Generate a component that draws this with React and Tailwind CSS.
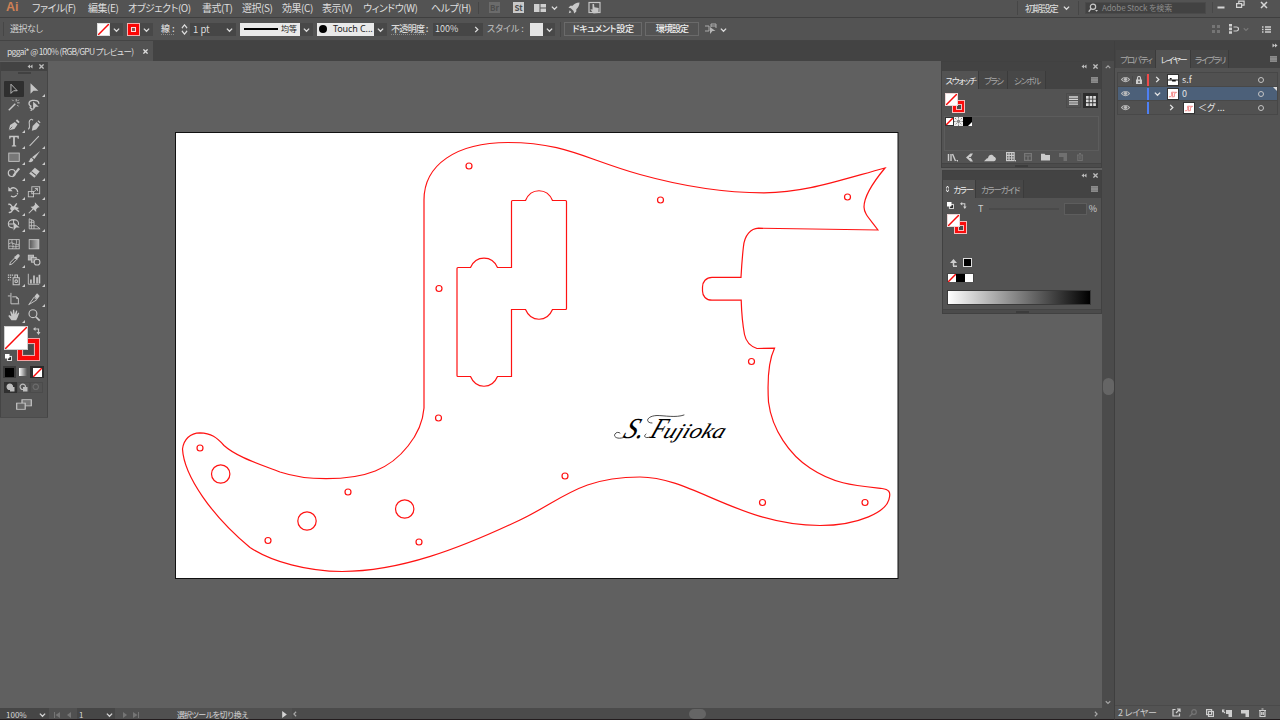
import React from 'react';

const cx = (...c) => c.filter(Boolean).join(' ');

function Icon({ className, box = 16, children, ...rest }) {
  return (
    <svg viewBox={`0 0 ${box} ${box}`} fill="none" stroke="currentColor" strokeWidth="1.2" className={cx('block shrink-0', className)} {...rest}>
      {children}
    </svg>
  );
}

const F = { fill: 'currentColor', stroke: 'none' };

function Chevron({ dir = 'down', className = 'size-[6px]' }) {
  const d = { down: 'M1 3l3 3 3-3', up: 'M1 5.5l3-3 3 3', right: 'M2.5 1l3 3-3 3', left: 'M5.5 1l-3 3 3 3' }[dir];
  return <Icon box={8} className={className} strokeWidth="1.5"><path d={d} /></Icon>;
}

function Menu() {
  return (
    <Icon className="h-[6px] w-[7px] bg-[#6f6f6f] text-[#999]" box={8} preserveAspectRatio="none" strokeWidth="1.1">
      <path d="M0 1h8M0 3h8M0 5h8M0 7h8" />
    </Icon>
  );
}

function NoneSwatch({ className }) {
  return (
    <svg viewBox="0 0 12 12" preserveAspectRatio="none" className={cx('block shrink-0 bg-white', className)}>
      <path d="M0 12L12 0" stroke="#fa0a0a" strokeWidth="1.5" vectorEffect="non-scaling-stroke" />
    </svg>
  );
}

function FillStroke() {
  return (
    <div className="relative h-[20px] w-[20px]">
      <div className="absolute left-[7px] top-[7px] size-[13px] border border-[#f8bcbc] bg-[#fb0d0d] p-[2.5px]">
        <div className="size-full border border-[#f8bcbc] bg-[#4a4a4a]" />
      </div>
      <NoneSwatch className="absolute left-0 top-0 size-[13px] border border-[#a33]/20" />
    </div>
  );
}

const MENUS = [
  ['ファイル(F)', 'w-[56px]'],
  ['編集(E)', 'w-[40px]'],
  ['オブジェクト(O)', 'w-[74px]'],
  ['書式(T)', 'w-[40px]'],
  ['選択(S)', 'w-[40px]'],
  ['効果(C)', 'w-[40px]'],
  ['表示(V)', 'w-[41px]'],
  ['ウィンドウ(W)', 'w-[68px]'],
  ['ヘルプ(H)', 'w-[46px]'],
];

function MenuBar() {
  return (
    <header className="flex h-[18px] items-center border-b border-[#3f3f3f] bg-[#535353] pb-[2px] text-[#dedede]">
      <div className="w-[32px] pl-[6px] text-[12.5px] font-bold leading-[17px] text-[#cf8055] font-['Liberation_Sans']">Ai</div>
      <nav className="flex text-[10px] leading-[14px] tracking-[-0.45px]">
        {MENUS.map(([t, w]) => <span key={t} className={w}>{t}</span>)}
      </nav>
      <div className="ml-[1px] h-[12px] w-px bg-[#464646]" />
      <div className="ml-[10px] flex h-[11px] w-[11px] items-center justify-center bg-[#6b6b6b] text-[8px] font-bold text-[#4d4d4d]">Br</div>
      <div className="ml-[13px] flex h-[11px] w-[11px] items-center justify-center bg-[#c9c9c9] text-[8px] font-bold text-[#4d4d4d]">St</div>
      <Icon className="ml-[10px] h-[8px] w-[12px] text-[#cfcfcf]" box={12} preserveAspectRatio="none">
        <path {...F} d="M0 0h5.5v12H0zM6.5 0H12v5.4H6.5zM6.5 6.6H12V12H6.5z" />
      </Icon>
      <span className="ml-[5px]"><Chevron className="size-[7px]" /></span>
      <Icon className="ml-[10px] size-[12px] text-[#c9c9c9]" box={13}>
        <path {...F} d="M12.5 0.5C9 .6 6.600 1.900 5 4L2.500 4 .500 6.300 3 6.800 6 9.800 6.700 12.500 9 10.200 9 7.800C11 6 12.200 4 12.500.5ZM.8 12.200l1-3.200 2 2z" />
      </Icon>
      <Icon className="ml-[8px] size-[13px] text-[#c4c4c4]" box={13}>
        <rect x="1" y="1.500" width="11" height="10" /><path {...F} d="M4.500 3l1.500 0 .4 3.200 4.300.8-.3 5-4.900.5-3.200-4.300 2.200.2z" />
      </Icon>
      <div className="ml-auto flex items-center">
        <div className="h-[14px] w-px bg-[#464646]" />
        <span className="ml-[7px] w-[38px] text-[9.5px] leading-[12px] tracking-[-1.4px]">初期設定</span>
        <Chevron className="size-[7px]" />
        <div className="ml-[8px] h-[14px] w-px bg-[#464646]" />
        <div className="ml-[6px] flex h-[12px] w-[121px] items-center border border-[#4a4a4a] bg-[#424242] text-[8px] text-[#8b8b8b]">
          <Icon className="ml-[1px] mr-[3px] h-[10px] w-[12px] text-[#c8c8c8]" box={12}>
            <circle cx="6" cy="4.500" r="3.200" strokeWidth="1.4" /><path d="M3.700 6.800L.8 10.500" strokeWidth="1.500" /><path {...F} d="M8.500 8.500h3.500l-1.700 2z" />
          </Icon>
          <span className="whitespace-nowrap tracking-[-0.12px]">Adobe Stock を検索</span>
        </div>
        <div className="ml-[6px] h-[11px] w-px bg-[#484848]" />
        <div className="flex w-[67px] items-center pb-[6px] text-[#d5d5d5]">
          <Icon className="ml-[4px] size-[8px]" box={8} strokeWidth="2"><path d="M.5 6.500h7" /></Icon>
          <Icon className="ml-[11px] size-[9px]" box={9}><path d="M.6 3.600h5v3.800h-5zM2.800 3.500V1.200h5.300v4H5.800" /></Icon>
          <Icon className="ml-[15px] size-[8px]" box={8} strokeWidth="1.500"><path d="M1 1l6 6M7 1L1 7" /></Icon>
        </div>
      </div>
    </header>
  );
}

function ControlBar() {
  return (
    <div className="flex h-[23px] items-center border-b border-[#444] bg-[#535353] text-[9px] text-[#dcdcdc]">
      <div className="ml-[3px] h-[14px] w-px bg-[#464646]" />
      <span className="ml-[6px] w-[87px] text-[9px] tracking-[-0.45px] text-[#cfcfcf]">選択なし</span>
      <NoneSwatch className="size-[13px] border border-[#ddd]" />
      <div className="flex h-[13px] w-[13px] items-center justify-center bg-[#484848]"><Chevron className="size-[7px]" /></div>
      <div className="ml-[4px] flex size-[13px] items-center justify-center border border-[#f3b0b0] bg-[#fb0505]">
        <div className="size-[5px] border border-[#ffdede] bg-[#8a5050]" />
      </div>
      <div className="flex h-[13px] w-[13px] items-center justify-center bg-[#484848]"><Chevron className="size-[7px]" /></div>
      <span className="ml-[8px] w-[19px] whitespace-nowrap font-medium underline decoration-dotted decoration-[#8a8a8a] underline-offset-2">線 :</span>
      <Icon className="ml-[1px] h-[11px] w-[7px]" box={8} preserveAspectRatio="none"><path d="M1 3l3-2.300L7 3M1 5l3 2.300L7 5" /></Icon>
      <div className="ml-[2px] flex h-[13px] w-[46px] items-center bg-[#464646] pl-[3px] pr-[3px] text-[9.5px]"><span className="flex-1 whitespace-nowrap">1 pt</span><Chevron className="size-[7px]" /></div>
      <div className="ml-[4px] flex h-[13px] w-[60px] items-center bg-[#e9e9e9] pl-[4px] text-[8px] text-[#222]">
        <div className="mr-[3px] h-[2px] w-[34px] bg-black" />均等
      </div>
      <div className="flex h-[13px] w-[13px] items-center justify-center bg-[#484848]"><Chevron className="size-[7px]" /></div>
      <div className="ml-[4px] flex h-[13px] w-[57px] items-center bg-[#e9e9e9] pl-[2px] text-[9px] text-[#222]">
        <div className="mr-[6px] size-[8px] rounded-full bg-black" /><span className="whitespace-nowrap font-['Noto_Sans'] tracking-[-0.1px]">Touch C...</span>
      </div>
      <div className="flex h-[13px] w-[13px] items-center justify-center bg-[#484848]"><Chevron className="size-[7px]" /></div>
      <span className="ml-[4px] w-[42px] whitespace-nowrap text-[9px] font-medium tracking-[-0.65px] underline decoration-dotted decoration-[#8a8a8a] underline-offset-2">不透明度 :</span>
      <div className="flex h-[13px] w-[50px] items-center bg-[#464646] pl-[2px] text-[9px]"><span className="w-[38px]">100%</span><Chevron dir="right" className="size-[7px]" /></div>
      <span className="ml-[4px] w-[43px] whitespace-nowrap text-[9px] text-[#c4c4c4]">スタイル :</span>
      <div className="size-[13px] bg-[#e3e3e3]" />
      <div className="flex h-[13px] w-[12px] items-center justify-center bg-[#484848]"><Chevron className="size-[7px]" /></div>
      <div className="ml-[5px] h-[15px] w-px bg-[#464646]" />
      <div className="ml-[3px] flex h-[14px] w-[78px] items-center justify-center whitespace-nowrap border border-[#6a6a6a] font-medium tracking-[-0.35px] text-[#eee]">ドキュメント設定</div>
      <div className="ml-[3px] flex h-[14px] w-[54px] items-center justify-center whitespace-nowrap border border-[#6a6a6a] font-medium tracking-[-0.9px] text-[#eee]">環境設定</div>
      <Icon className="ml-[6px] size-[12px] text-[#b5b5b5]" box={12}>
        <path d="M0 3h4v5H0M6 4V1h5v4M6 3h5" strokeWidth=".9" /><path {...F} d="M5 4l5.500 4H7.500L5 11z" />
      </Icon>
      <span className="ml-[3px]"><Chevron className="size-[7px]" /></span>
      <div className="ml-auto flex items-center pr-[9px] text-[#d0d0d0]">
        <Icon className="size-[8px] text-[#757575]" box={8}><path {...F} d="M0 0h3v3H0zM5 0h3v3H5zM0 5h3v3H0zM5 5h3v3H5z" /></Icon>
        <Icon className="ml-[9px] size-[10px]" box={10}><path {...F} d="M0 0h3v2.600H0zM0 3.600h3v2.600H0zM0 7.200h3v2.600H0z" /><path d="M4.500 3h3a2 2 0 010 4h-3" /></Icon>
        <span className="ml-[4px] text-[#777]"><Chevron /></span>
        <Icon className="ml-[13px] size-[9px]" box={9}><path d="M0 2h1.500M0 4.500h1.500M0 7h1.500M3 2h6M3 4.500h6M3 7h6" strokeWidth="1.300" /></Icon>
      </div>
    </div>
  );
}

const TOOLS = [
  [
    ['sel', <path d="M4.500 2.500v10.500l3-3h4.200z" strokeWidth="1" />],
    ['dir', <path {...F} d="M4 1.500v12l3.400-3.400H13z" />, 1],
    ['wand', <><path d="M2 14l7.500-7.500" strokeWidth="1.700" /><path d="M10.500 1v3M14.500 5.500h-3M6 2l1.500 1.500M13.500 2L12 3.500M13 9.500L11.800 8" strokeWidth="1" /></>],
    ['lasso', <><path d="M5 9.500C1 8 1.500 3.500 6 2.800s8 .7 7.500 4M5 9.500c-2 .5-2 2 0 2.500s.5 2-1 2.200" strokeWidth="1.500" /><path {...F} d="M7 4l6.500 6H10l-3 4z" /></>],
  ],
  [
    ['pen', <><path {...F} d="M2 14l1.500-6L9 4.500l3 3L8.500 12.500z" /><path {...F} d="M10 3l1.500-1.500 3 3L13 6z" /><path d="M2.500 13.500l3.500-3.500" stroke="#535353" strokeWidth=".8" /></>, 1],
    ['curve', <><path {...F} d="M5.500 14.500l1-5.500L11 4.500l3.500 3.500-4 5z" /><path {...F} d="M12 3.600l1-1 2.500 2.500-1 1z" /><path d="M1.500 13C5 10 1 6 3 3s3-1 4-.5" /></>],
    ['type', <path {...F} d="M2.500 2h11v3.300h-1.200l-.5-1.500H9v9l1.500.4v1.100h-5v-1.100l1.500-.4V3.800H4.200l-.5 1.500H2.500z" />, 1],
    ['line', <path d="M3 13.500L13.500 2.500" />, 1],
    ['rect', <rect x="2" y="3.500" width="12" height="9.500" fill="#777" strokeWidth="1" />, 1],
    ['brush', <><path {...F} d="M15 1L8.500 10.300 5.800 8.200z" /><path {...F} d="M5 8.800l2.300 2C7 13.500 4 14.500 1.500 13.500 3.500 12.500 2.800 9.500 5 8.800z" /></>, 1],
    ['shaper', <><circle cx="5.500" cy="8" r="4" strokeWidth="1.400" /><path {...F} d="M15 3.500l-6.500 7.500-2.500 2 .8-3L12.800 2z" /></>, 1],
    ['eraser', <><path {...F} d="M9 2l5.500 4.300-6 7.200-6-4.800z" /><path d="M5 6.500l5.300 4.300" stroke="#535353" /></>, 1],
  ],
  [
    ['rotate', <><path d="M4 4.500a5 5 0 11.500 8" strokeWidth="1.500" strokeDasharray="11 1 1.500 1" /><path {...F} d="M1.500 2v5h5z" /></>, 1],
    ['scale', <><rect x="5.500" y="2" width="9" height="8" strokeWidth="1" /><rect x="1.500" y="7.500" width="6" height="6" strokeWidth="1" /><path d="M7 8.500L12 4M9 4h3v3" strokeWidth="1" /></>, 1],
    ['width', <><path d="M1.500 4c4-2 3 4 6 3s2-4 4-4M2 13c4 1 3-3 6-4s4 3 6 3M7 7l6 1.500" strokeWidth="1.700" /><circle cx="6" cy="8.500" r="2.300" {...F} /></>, 1],
    ['pin', <><path {...F} d="M9 1.500l5.500 5.500-2 .5-2 2 0 3L4 6.500 7 6.300l2-2z" /><path d="M7 9l-5 5" /></>, 1],
    ['shape', <><path d="M7 12.500C3 12.500 1.500 10 1.500 7.500S4 3 8 3s6 3 5 6M1.500 8H8M7.500 3v5" strokeWidth="1.200" /><path {...F} d="M7.500 6l7 6h-4l-3 3.500z" /></>, 1],
    ['persp', <path d="M2.500 2v11.500H15M2.500 2L8 4.500v9M2.500 6H8M2.500 10h8L15 13.500M5 3v10.500" strokeWidth="1" />, 1],
  ],
  [
    ['mesh', <><rect x="2" y="3" width="12" height="10.500" strokeWidth="1" /><path d="M2 8c4-4 8 3 12 0M6 3c-2 4 3 6 0 10.500M10.500 3c2 4-2 6 0 10.500M2 11c3-2 6 2 12-1" strokeWidth=".9" /></>],
    ['grad', <rect x="2.500" y="3" width="11" height="10.500" fill="url(#toolgrad)" strokeWidth="1" />],
    ['dropper', <><path d="M3 13.500l1-3L9 5.500l2 2-5 5z" strokeWidth="1.100" /><path {...F} d="M8 4.500l1.500-.8L12 1.500c2-.5 3 1 2.300 2.500L12 6.500l-.5 1.500z" /></>, 1],
    ['blend', <><rect x="1.500" y="2.500" width="6" height="5.500" fill="#aaa" strokeWidth="1" /><rect x="5" y="5" width="5.500" height="5.500" fill="#888" strokeWidth="1" /><circle cx="11.500" cy="10.500" r="3.300" fill="#535353" /></>],
  ],
  [
    ['spray', <><path d="M7 6.500h7v8H7zM9 6V3.500h3V6" strokeWidth="1.200" /><circle cx="10.500" cy="10.500" r="1.500" /><path d="M1 3.500h6M1 6.200h4M1 9h3" strokeWidth="1.300" strokeDasharray="1.500 .8" /></>, 1],
    ['graph', <><path d="M1.500 2v12H14" strokeWidth="1" /><path d="M4.500 13V8.500M8 13V4M11.500 13V6M14.200 13V3" strokeWidth="1.900" /></>, 1],
  ],
  [
    ['artboard', <path d="M4.500 1v12.500H14M1 4.500h3M6 5.500h5l2 2v5.500M11 5.500v2h2" strokeWidth="1.100" />],
    ['slice', <><path d="M2 14.500L8 6l3 3z" strokeWidth="1.100" /><path {...F} d="M8.500 5l3-3.500 3 3L11.500 8.500z" /></>, 1],
    ['hand', <path {...F} d="M5 14L1.500 9l1-1L5 9.500 3.500 4l1.300-.4L6.500 7 6.800 2h1.400L8.800 7 10.500 2.800l1.300.4L11 7.800 13 5l1 .7-2 5.300L10.500 14z" />, 1],
    ['zoom', <><circle cx="6.800" cy="6.500" r="4.500" strokeWidth="1.300" /><path d="M10 10l4.500 4.500" strokeWidth="2" /></>],
  ],
];

function PanelHead() {
  return (
    <div className="flex h-[9px] shrink-0 items-center justify-end bg-[#434343] text-[#bdbdbd]">
      <Icon className="h-[5px] w-[6px]" box={6}><path {...F} d="M3 0.500v5L0 3zM6 .5v5L3 3z" /></Icon>
      <Icon className="ml-[6px] mr-[3px] size-[5px]" box={6} strokeWidth="1.600"><path d="M.5.5l5 5M5.500.5l-5 5" /></Icon>
    </div>
  );
}

function Toolbar() {
  return (
    <aside className="absolute left-0 top-[1px] flex h-[355px] w-[48px] flex-col border-x border-[#454545] bg-[#535353] text-[#c6c6c6] shadow-[0_1px_0_#4b4b4b]">
      <svg width="0" height="0" className="absolute"><linearGradient id="toolgrad"><stop stopColor="#555" /><stop offset="1" stopColor="#bbb" /></linearGradient></svg>
      <PanelHead />
      <div className="mx-auto mt-[1px] h-[2px] w-[13px] shrink-0 bg-[#414141]" />
      <div className="mt-[7px] flex shrink-0 flex-col gap-[3.5px] px-[3px]">
        {TOOLS.map((group, g) => (
          <div key={g} className="grid grid-cols-[20px_20px]">
            {group.map(([name, art, sub]) => (
              <div key={name} className={cx('relative flex h-[16px] items-center justify-center', name === 'sel' && 'rounded-[1px] bg-[#2f2f2f]')}>
                <Icon className="size-[14px]">{art}</Icon>
                {sub && <Icon box={3} className="absolute bottom-0 right-[-1px] size-[3px] text-[#ccc]"><path {...F} d="M3 0v3H0z" /></Icon>}
              </div>
            ))}
          </div>
        ))}
      </div>
      <div className="relative mx-[3px] mt-[3.5px] h-[36px] shrink-0">
        <div className="absolute left-[13px] top-[12px] h-[23px] w-[23px] border border-[#f3a3a3] bg-[#fa0808] p-[4px]">
          <div className="size-full border border-[#eaa] bg-[#535353] p-px"><div className="size-full bg-[#494949]" /></div>
        </div>
        <NoneSwatch className="absolute left-0 top-0 size-[24px] border border-[#cfcfcf]" />
        <Icon className="absolute left-[29px] top-[1px] size-[8px]" box={8}><path d="M2 2h3.500v4" /><path {...F} d="M2.500 0v4L0 2zM3.500 5h4L5.500 8z" /></Icon>
        <Icon className="absolute left-[1px] top-[28px] size-[7px]" box={7}><rect x="2.500" y="2.500" width="4" height="4" fill="#111" stroke="#ddd" /><rect x="0" y="0" width="4.500" height="4.500" fill="#fff" stroke="none" /></Icon>
      </div>
      <div className="mt-[2px] flex h-[14px] shrink-0 items-center pl-[2px] pt-[2px]">
        <div className="flex h-[12px] w-[13px] items-center justify-center bg-[#3a3a3a]"><div className="size-[9px] bg-black" /></div>
        <div className="flex h-[12px] w-[14px] items-center justify-center"><div className="size-[8px] bg-[linear-gradient(to_right,#fff,#555)]" /></div>
        <div className="flex h-[12px] w-[14px] items-center justify-center bg-[#2c2c2c]"><NoneSwatch className="size-[9px]" /></div>
      </div>
      <div className="mt-[4px] flex shrink-0 pl-[3px] text-[#bdbdbd]">
        {[0, 1, 2].map((i) => (
          <div key={i} className={cx('flex h-[11px] w-[13px] items-center justify-center', i === 0 ? 'bg-[#303030]' : 'border border-[#4b4b4b]', i === 2 && 'text-[#6c6c6c]')}>
            <Icon className="size-[9px]" box={9}><circle cx="3.800" cy="3.800" r="2.700" fill={i === 0 ? 'currentColor' : 'none'} />{i < 2 && <rect x="4" y="4" width="4.500" height="4.500" {...F} />}</Icon>
          </div>
        ))}
      </div>
      <Icon className="mx-auto mt-[6px] h-[11px] w-[16px]" box={16} preserveAspectRatio="none">
        <rect x="6" y="1" width="9.300" height="9" fill="#777" /><rect x=".700" y="6" width="8.500" height="9" fill="#666" />
      </Icon>
    </aside>
  );
}

const HOLES = [[469, 166], [660.5, 200], [847.5, 197], [439, 288.5], [751.5, 361.5], [438.5, 418], [200, 448], [348, 492], [268, 540.5], [419, 542], [565, 476], [762.5, 502.5], [865, 502.5]];
const POTS = [[220.7, 474], [307, 521], [404.7, 509]];

function Artboard() {
  return (
    <svg viewBox="0 61 1102 647" className="block h-[647px] w-[1102px]">
      <rect x="175.500" y="132.500" width="722.500" height="446" fill="#fff" stroke="#111" />
      <g fill="none" stroke="#ff1212" strokeWidth="1.200">
        <path d="M424 408V200C424 165 456 142.500 508 142.500C565 142.500 585 159 640 174.500C685 187 728 192.800 764 192.800C804 192.500 832 182.500 885 168C875 180 864 196 864 207C864 214 870 219 878 230L758.500 228.200C751 228.500 744.500 235 743.400 247Q742 259 741 277.300H712C706 277.300 702.500 282 702.500 287V291C702.500 296 706 300.200 712 300.200H741.200Q741.800 320 744.500 334.500C746 342 751 346.500 757 348.500L774.500 348.200C767 364 767.500 385 768.500 402C772 430 790 455 810 468C834 484 854 485.500 882 488.500C889 489.500 890.500 492 889.500 497C888 512 858 525.500 820 525.500C740 525.500 692 477 640 477C580 477 562 500 520 520C460 548.500 400 571.500 342 571.500C308 571.500 272 562 250 547.500C212 516 184 476 182.500 449C183.500 440 190 432.800 200 432.800C211 433.200 217 437.500 224 445.500C236 456.500 258 463.500 280 472C298 478 312 478.700 326 478.700C366 478.700 390 469 408 446C418.500 433 423 421 424 408Z" />
        <path d="M458 267.500H470.500C476 255 492 255 497.500 267.500H511.500V201.500Q511.500 200.500 512.500 200.500H525.500C531 187.500 547 187.500 552.500 200.500H565.500Q566.500 200.500 566.500 201.500V308.500Q566.500 309.500 565.500 309.500H552.500C547 322.500 531 322.500 525.500 309.500H511.500V376.500H497.500C492 389.500 476 389.500 470.500 376.500H458Q457 376.500 457 375.500V268.500Q457 267.500 458 267.500Z" />
        {HOLES.map(([x, y]) => <circle key={`${x}-${y}`} cx={x} cy={y} r="3" />)}
        {POTS.map(([x, y]) => <circle key={x} cx={x} cy={y} r="9.200" />)}
      </g>
      <g className="fill-black italic" fontFamily="'Liberation Serif', serif">
        <text transform="translate(622 438) skewX(-22)" fontSize="29" textLength="20" lengthAdjust="spacingAndGlyphs">S.</text>
        <text transform="translate(649 438) skewX(-22)" fontSize="29" textLength="14" lengthAdjust="spacingAndGlyphs">F</text>
        <text transform="translate(662 438) skewX(-22)" fontSize="21" textLength="61" lengthAdjust="spacingAndGlyphs">ujioka</text>
      </g>
      <g fill="none" stroke="#000" strokeLinecap="round" strokeWidth=".7">
        <path d="M625 437C618 440 613 437 615 434C616 432 619 432 620 433" />
        <path d="M652 423C645 423 646 416 657 415.500C664 415.500 676 418 684 415" />
        <path d="M650 437C645 439 643 436 646 434" />
      </g>
    </svg>
  );
}

function Tabs({ items, active, className }) {
  return (
    <div className={cx('flex shrink-0 bg-[#434343]', className)}>
      {items.map(([t, w], i) => (
        <div key={i} className={cx('flex items-center justify-center whitespace-nowrap border-r border-[#3b3b3b] pl-px text-[8.5px] tracking-[-1.3px]', w, i === active ? 'bg-[#535353] text-[#ececec]' : 'bg-[#474747] text-[#a8a8a8]')}>{t}</div>
      ))}
      <div className="ml-auto flex items-center pr-[3px]"><Menu /></div>
    </div>
  );
}

function Grip() {
  return <div className="flex h-[4px] shrink-0 items-center justify-center border-t border-[#444] bg-[#4b4b4b]"><div className="h-[2px] w-[13px] bg-[#3c3c3c]" /></div>;
}

function SwatchPanel() {
  return (
    <section className="absolute left-[941px] top-0 flex h-[107px] w-[161px] flex-col border border-[#414141] bg-[#535353]">
      <PanelHead />
      <Tabs className="h-[18px]" active={0} items={[['スウォッチ', 'w-[37px]'], ['ブラシ', 'w-[29px]'], ['シンボル', 'w-[38px]']]} />
      <div className="flex justify-between px-[3px] pt-[4px]">
        <FillStroke />
        <div className="flex gap-[2px]">
          <div className="flex size-[15px] items-center justify-center border border-[#4b4b4b]"><Icon className="size-[9px] text-[#d5d5d5]" box={9} strokeWidth="1.300"><path d="M0 1h9M0 3.400h9M0 5.800h9M0 8.200h9" /></Icon></div>
          <div className="flex size-[15px] items-center justify-center bg-[#2d2d2d]"><Icon className="size-[10px] text-[#dadada]" box={10}><path {...F} d="M0 0h2.700v2.700H0zM3.600 0h2.700v2.700H3.600zM7.200 0h2.700v2.700H7.200zM0 3.600h2.700v2.700H0zM3.600 3.600h2.700v2.700H3.600zM7.200 3.600h2.700v2.700H7.200zM0 7.200h2.700v2.700H0zM3.600 7.200h2.700v2.700H3.600zM7.200 7.200h2.700v2.700H7.200z" /></Icon></div>
        </div>
      </div>
      <div className="mx-[2px] mt-[3px] flex h-[35px] border border-[#5c5c5c] bg-[#515151]">
        <NoneSwatch className="size-[9px] border border-[#333]" />
        <Icon className="size-[9px] bg-[#eee] text-[#555]" box={9}><path d="M4.500 0v9M0 4.500h9M1 1l7 7M8 1L1 8" strokeWidth=".7" strokeDasharray="1.500 1" /></Icon>
        <Icon className="size-[9px] bg-black text-white" box={9}><path {...F} d="M9 5v4H5z" /></Icon>
      </div>
      <div className="flex flex-1 items-center pl-[5px] text-[#cbcbcb]">
        <Icon className="size-[11px]" box={11} strokeWidth="1.400"><path d="M1.500 2v7M4 2v7M5.500 2l3 7" /><path {...F} d="M9 8h2v2z" /></Icon>
        <Icon className="ml-[8px] size-[9px]" box={9}><path {...F} d="M0 4.500L4.500.5h2.500L4.500 4.500 7 8.500H4.500z" /><path d="M3 4.500h4" stroke="#535353" strokeWidth=".8" /></Icon>
        <Icon className="ml-[9px] h-[9px] w-[12px]" box={12} preserveAspectRatio="none"><path {...F} d="M0 11l3-4h1C4 3 8 0 10 5c3 1 2 6 0 6z" /></Icon>
        <Icon className="ml-[10px] size-[10px]" box={10}><rect x=".600" y=".6" width="7.500" height="8" /><path d="M.6 3.300h7.500M.6 6h7.500M3 .6v8M5.700.6v8" /><path {...F} d="M8.500 8h1.500v2z" /></Icon>
        <Icon className="ml-[8px] size-[8px] text-[#777]" box={8}><rect x=".6" y=".6" width="6.800" height="6.800" /><path d="M.6 3h6.800M4 3v4" /></Icon>
        <Icon className="ml-[9px] h-[8px] w-[9px]" box={10} preserveAspectRatio="none"><path {...F} d="M0 1h4l1 1.500h5V9.500H0z" /></Icon>
        <Icon className="ml-[9px] size-[8px] text-[#707070]" box={8}><path {...F} d="M0 0h8v8H4.500V4H0z" /></Icon>
        <Icon className="ml-[9px] size-[8px] text-[#707070]" box={8}><path d="M1 2h6M1.800 2v5.500h4.400V2M3 .6h2M4 3v3.500" /></Icon>
      </div>
      <Grip />
    </section>
  );
}

function ColorPanel() {
  return (
    <section className="absolute left-[942px] top-[109px] flex h-[144px] w-[160px] flex-col border border-[#414141] bg-[#535353]">
      <PanelHead />
      <Tabs className="h-[18px]" active={0} items={[[<span key="c" className="flex items-center gap-[4px]"><Icon className="h-[6px] w-[3px]" box={6} preserveAspectRatio="none"><path d="M0 2.500L3 0l3 2.500M0 3.500L3 6l3-2.500" /></Icon>カラー</span>, 'w-[33px]'], ['カラーガイド', 'w-[48px]']]} />
      <div className="flex h-[110px] shrink-0 flex-col px-[4px] pt-[4px]">
        <div className="flex h-[12px] text-[#cfcfcf]">
          <Icon className="size-[7px]" box={7}><rect x="2.500" y="2.500" width="4" height="4" fill="#111" /><rect width="4.500" height="4.500" fill="#fff" stroke="none" /></Icon>
          <Icon className="ml-[6px] size-[7px]" box={8}><path d="M2 2h3.500v4" /><path {...F} d="M2.500 0v4L0 2zM3.500 5h4L5.500 8z" /></Icon>
          <span className="ml-[11px] mt-[2px] w-[6px] text-[9px] leading-[10px]">T</span>
          <div className="ml-[5px] mt-[6px] h-[2px] w-[70px] border border-[#4a4a4a]" />
          <div className="ml-[5px] mt-[1px] h-[12px] w-[23px] border border-[#5d5d5d] bg-[#484848]" />
          <span className="ml-[2px] mt-[2px] text-[9px] leading-[10px]">%</span>
        </div>
        <FillStroke />
        <div className="mt-[23px] flex h-[11px] items-center gap-[5px] text-[#cfcfcf]">
          <Icon className="ml-[3px] size-[8px]" box={8}><path d="M3 7.200h4M3.500 7V3" strokeWidth="1.500" /><path {...F} d="M3.500 0L7 4H0z" /></Icon>
          <div className="size-[9px] border border-[#ddd] bg-black" />
        </div>
        <div className="mt-[5px] flex h-[9px] w-[27px] border border-[#444]">
          <NoneSwatch className="h-[8px] w-[8px]" /><div className="h-[8px] w-[9px] bg-black" /><div className="h-[8px] w-[9px] bg-white" />
        </div>
        <div className="mt-[8px] h-[15px] w-[144px] border border-[#3a3a3a] bg-[linear-gradient(to_right,#fff,#000)]" />
      </div>
      <div className="mt-auto"><Grip /></div>
    </section>
  );
}

function StatusBar() {
  return (
    <footer className="flex h-[12px] items-center overflow-hidden border-b border-[#221c1e] bg-[#4b4b4b] text-[8px] leading-[11px] text-[#d5d5d5]">
      <div className="flex h-full w-[49px] items-center bg-[#464646] pl-[6px] pt-[2px]"><span className="w-[33px]">100%</span><Chevron className="size-[7px]" /></div>
      <div className="flex h-full w-[28px] items-center gap-[6px] bg-[#505050] pl-[5px] pt-[2px] text-[#757575]">
        <Icon className="size-[6px]" box={6}><path {...F} d="M6 0v6L1.500 3zM0 0h1v6H0z" /></Icon><Icon className="size-[6px]" box={6}><path {...F} d="M5 0v6L1 3z" /></Icon>
      </div>
      <div className="flex h-full w-[38px] items-center bg-[#464646] pl-[2px] pt-[2px]"><span className="w-[27px]">1</span><Chevron className="size-[7px]" /></div>
      <div className="flex h-full w-[29px] items-center gap-[5px] bg-[#505050] pl-[7px] pt-[2px] text-[#757575]">
        <Icon className="size-[6px]" box={6}><path {...F} d="M1 0v6l4-3z" /></Icon><Icon className="size-[6px]" box={6}><path {...F} d="M0 0v6l4.500-3zM5 0h1v6H5z" /></Icon>
      </div>
      <div className="h-full w-[135px] bg-[#505050] pl-[33px] pt-[1px] tracking-[-0.9px]"><span className="whitespace-nowrap [font-feature-settings:normal]">選択ツールを切り換え</span></div>
      <div className="flex h-full w-[13px] items-center bg-[#505050] pl-[2px] pt-px"><Icon className="size-[7px]" box={6}><path {...F} d="M1 0v6l4-3z" /></Icon></div>
      <span className="text-[#aaa]"><Chevron dir="left" /></span>
      <div className="ml-[391px] h-[10px] w-[17px] rounded-full bg-[#656565]" />
      <span className="ml-auto pr-[15px] text-[#aaa]"><Chevron dir="right" /></span>
    </footer>
  );
}

function LayerRow({ name, selected, locked, open, nested, bar, ink }) {
  return (
    <div className={cx('relative flex h-[14px] items-center border-b border-[#484848] text-[9px] text-[#e4e4e4]', selected ? 'bg-[#4c6079]' : 'bg-[#515151]')}>
      <div className="flex w-[14px] justify-center"><Icon className="h-[7px] w-[9px] text-[#bdbdbd]" box={10} preserveAspectRatio="none"><path d="M.5 5C3 .8 7 .8 9.500 5 7 9.200 3 9.200.5 5z" /><circle cx="5" cy="5" r="2" {...F} /></Icon></div>
      <div className="flex w-[14px] justify-center border-x border-[#484848]">{locked && <Icon className="size-[8px] text-[#ccc]" box={8}><path {...F} d="M1 3.500h6V8H1z" /><path d="M2.500 4V2a1.500 1.500 0 013 0v2" /><path d="M4 5v2" stroke="#444" /></Icon>}</div>
      <div className={cx('ml-[1px] h-[12px] w-[2px]', bar)} />
      <div className={nested ? 'ml-[19px]' : 'ml-[5px]'}><Chevron dir={open ? 'down' : 'right'} className="size-[7px]" /></div>
      <svg viewBox="0 0 11 11" className={cx('block size-[12px] shrink-0 border border-[#333] bg-white', nested ? 'ml-[8px]' : 'ml-[6px]')}>
        {ink ? <path d="M0 5.500h11M2 4h2M4.500 6.500h4" stroke="#111" strokeWidth="1.300" /> : <path d="M1 8.500C3 9 4 8 4 6V3.500l5.500.2L7 5v3.500L4 8.600M5 4v4" fill="none" stroke="#f48a8a" strokeWidth="1.1" />}
      </svg>
      <span className="ml-[3px] whitespace-nowrap">{name}</span>
      <div className="ml-auto mr-[13px] size-[6px] rounded-full border border-[#c4c4c4]" />
      {selected && <Icon box={4} className="absolute right-0 top-0 size-[4px] text-[#ddd]"><path {...F} d="M0 0h4v4z" /></Icon>}
    </div>
  );
}

function Dock() {
  return (
    <aside className="flex w-[166px] flex-col border-b border-l border-b-[#221c1e] border-l-[#3f3f3f] bg-[#535353]">
      <div className="flex h-[9px] items-center justify-end bg-[#434343] pr-[2px] text-[#c5c5c5]"><Icon className="h-[5px] w-[6px]" box={6}><path {...F} d="M0 .5v5L3 3zM3 .5v5L6 3z" /></Icon></div>
      <Tabs className="h-[18px] pl-[1px]" active={1} items={[['プロパティ', 'w-[40px]'], ['レイヤー', 'w-[35px]'], ['ライブラリ', 'w-[38px]']]} />
      <div className="mx-[2px] mt-[4px] border border-b-0 border-[#474747]">
        <LayerRow name="s.f" locked bar="bg-[#f04a4a]" ink />
        <LayerRow name="0" selected open bar="bg-[#4e80f5]" />
        <LayerRow name="＜グ ..." nested bar="bg-[#4e80f5]" />
      </div>
      <div className="mt-auto flex h-[14px] items-center border-t border-[#4a4a4a] text-[9px] text-[#cfcfcf]">
        <span className="ml-[3px] w-[54px] whitespace-nowrap tracking-[-0.2px]">2 レイヤー</span>
        <Icon className="size-[9px]" box={9}><path d="M3.500 1.500H1V8h6.500V5.500M4 5l4-4M5 1h3v3" /></Icon>
        <Icon className="ml-[8px] size-[8px] text-[#747474]" box={8}><circle cx="5" cy="3" r="2.300" /><path d="M3.500 4.500L.5 7.500" /></Icon>
        <Icon className="ml-[9px] size-[8px]" box={8}><rect x=".6" y=".6" width="5" height="5" /><rect x="2.500" y="2.500" width="5" height="5" /></Icon>
        <Icon className="ml-[8px] size-[10px]" box={10}><path {...F} d="M4 2h6v7H6.500V6H4z" /><path d="M0 2l3 3M0 4.500V2h2.500" /></Icon>
        <Icon className="ml-[9px] size-[8px]" box={8}><path {...F} d="M0 1h8v7H4.500V4.500H0z" /></Icon>
        <Icon className="ml-[9px] size-[9px]" box={9}><path d="M1 2.500h7M2 2.500v6h5v-6M3.500 1h2M3.700 4v3M5.300 4v3" /></Icon>
      </div>
    </aside>
  );
}

export default function App() {
  return (
    <div className="flex h-[720px] w-[1280px] flex-col overflow-hidden bg-[#535353] font-['Noto_Sans_CJK_JP','Noto_Sans',sans-serif] [font-feature-settings:'palt']">
      <MenuBar />
      <ControlBar />
      <div className="flex min-h-0 flex-1">
        <main className="flex w-[1114px] flex-col">
          <div className="flex h-[20px] bg-[#434343]">
            <div className="flex w-[153px] items-center bg-[#535353] pl-[7px] text-[8.5px] text-[#dedede]">
              <span className="w-[136px] whitespace-nowrap tracking-[-0.65px]">pggai* @ 100% (RGB/GPU プレビュー)</span>
              <Icon className="size-[5px]" box={6} strokeWidth="1.600"><path d="M.5.5l5 5M5.500.5l-5 5" /></Icon>
            </div>
          </div>
          <div className="relative flex h-[647px]">
            <div className="w-[1102px] bg-[#606060]"><Artboard /></div>
            <div className="flex w-[12px] flex-col items-center bg-[#4b4b4b] text-[#a5a5a5]">
              <span className="mt-[3px]"><Chevron dir="up" /></span>
              <div className="mt-[308px] h-[17px] w-[11px] rounded-full bg-[#656565]" />
              <span className="mb-[3px] mt-auto"><Chevron /></span>
            </div>
            <Toolbar />
            <SwatchPanel />
            <ColorPanel />
          </div>
          <StatusBar />
        </main>
        <Dock />
      </div>
    </div>
  );
}
